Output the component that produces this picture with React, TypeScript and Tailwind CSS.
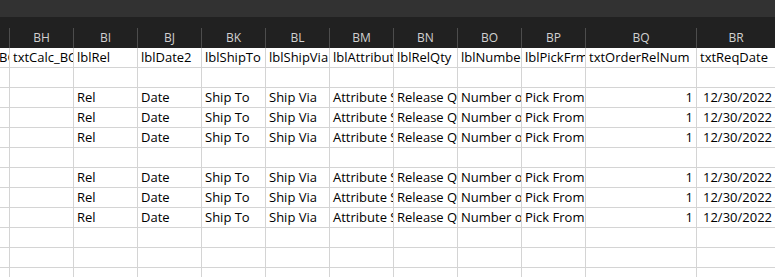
import React from 'react';

const columns = ['BG', 'BH', 'BI', 'BJ', 'BK', 'BL', 'BM', 'BN', 'BO', 'BP', 'BQ', 'BR'];

type Cell = { text: string; align?: 'right'; shift?: boolean };

const labelRow: Cell[] = [
  { text: 'BO', shift: true },
  { text: 'txtCalc_BOM' },
  { text: 'lblRel' },
  { text: 'lblDate2' },
  { text: 'lblShipTo' },
  { text: 'lblShipVia' },
  { text: 'lblAttributeSet' },
  { text: 'lblRelQty' },
  { text: 'lblNumberOf' },
  { text: 'lblPickFrm' },
  { text: 'txtOrderRelNum' },
  { text: 'txtReqDate' },
];

const dataRow: Cell[] = [
  { text: '' },
  { text: '' },
  { text: 'Rel' },
  { text: 'Date' },
  { text: 'Ship To' },
  { text: 'Ship Via' },
  { text: 'Attribute Set' },
  { text: 'Release Qty' },
  { text: 'Number of' },
  { text: 'Pick From' },
  { text: '1', align: 'right' },
  { text: '12/30/2022', align: 'right' },
];

const emptyRow: Cell[] = columns.map(() => ({ text: '' }));

const rows: Cell[][] = [
  labelRow,
  emptyRow,
  dataRow,
  dataRow,
  dataRow,
  emptyRow,
  dataRow,
  dataRow,
  dataRow,
  emptyRow,
  emptyRow,
  emptyRow,
];

// BR ends just past the window edge, so its right border is not seen
const gridCols = 'grid w-[776px] grid-cols-[10px_repeat(9,64px)_111px_1fr]';

export default function App() {
  return (
    <div className="w-[775px] h-[277px] overflow-hidden bg-white" style={{ fontFamily: '"Open Sans", "Noto Sans", sans-serif' }}>
      <div className="h-[17px] bg-[#323232]" />
      <div className="h-[11px] bg-[#212121]" />
      <div className={`${gridCols} h-[20px] bg-[#212121]`}>
        {columns.map((col) => (
          <div
            key={col}
            className="border-r border-[#4d4d4d] flex items-center justify-center text-[12px] text-[#d2d2d2] overflow-hidden whitespace-nowrap"
          >
            {col === 'BG' ? '' : col}
          </div>
        ))}
      </div>
      {rows.map((row, r) => (
        <div key={r} className={`${gridCols} h-[20px]`}>
          {row.map((cell, c) => (
            <div
              key={c}
              className={`border-r border-b border-[#d4d4d4] overflow-hidden whitespace-nowrap text-[13px] leading-[19px] text-black px-[3px] ${
                cell.align === 'right' ? 'text-right' : 'text-left'
              } ${cell.shift ? 'pl-0' : ''}`}
            >
              {cell.shift ? <span className="ml-[-1px]">{cell.text}</span> : cell.text}
            </div>
          ))}
        </div>
      ))}
    </div>
  );
}
